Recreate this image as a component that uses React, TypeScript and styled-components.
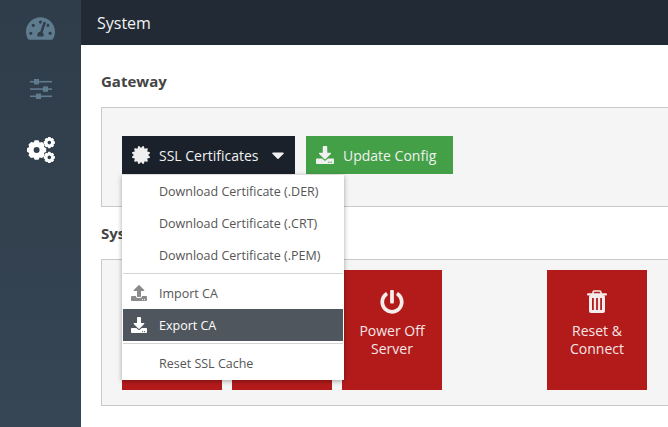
import React from 'react';
import styled, { createGlobalStyle } from 'styled-components';
import { FaTachometerAlt, FaCertificate, FaDownload, FaUpload, FaPowerOff, FaCaretDown } from 'react-icons/fa';

const GlobalStyle = createGlobalStyle`
  html, body {
    margin: 0;
    padding: 0;
    height: 100%;
    overflow: hidden;
    background: #fff;
    font-family: "Open Sans", "Liberation Sans", sans-serif;
  }
  #root { height: 100%; }
`;

const Page = styled.div`
  display: flex;
  width: 668px;
  height: 427px;
  overflow: hidden;
`;

const Sidebar = styled.nav`
  width: 81px;
  flex: none;
  display: flex;
  flex-direction: column;
  background: linear-gradient(#2f3c4a, #374654);
`;

const NavItem = styled.div<{ $active?: boolean }>`
  height: 61px;
  box-sizing: border-box;
  padding-bottom: 5px;
  display: flex;
  align-items: center;
  justify-content: center;
  color: ${p => (p.$active ? '#fff' : '#5f7b8e')};
  font-size: 29px;
`;

const Main = styled.main`
  flex: 1;
  min-width: 0;
  display: flex;
  flex-direction: column;
`;

const Header = styled.header`
  height: 45px;
  flex: none;
  box-sizing: border-box;
  padding-left: 16px;
  display: flex;
  align-items: center;
  background: #222a35;
  color: #f2f2f2;
  font-size: 16px;
`;

const Content = styled.div`
  padding: 26px 0 0 20px;
`;

const SectionTitle = styled.h2`
  margin: 0 0 16px;
  height: 20px;
  line-height: 20px;
  font-size: 15px;
  font-weight: 700;
  color: #444;
`;

const Panel = styled.section<{ $height: number }>`
  box-sizing: border-box;
  height: ${p => p.$height}px;
  margin-bottom: 16px;
  margin-right: -1px;
  padding: 28px 0 0 20px;
  background: #f5f5f5;
  border: 1px solid #c9c9c9;
  border-right: none;
  display: flex;
  gap: 10px;
  position: relative;
`;

const GatewayPanel = styled(Panel)`
  gap: 11px;
`;

const ActionPanel = styled(Panel)`
  padding-top: 10px;
`;

const ToolButton = styled.button<{ $bg: string }>`
  height: 38px;
  border: none;
  display: flex;
  align-items: center;
  gap: 9px;
  padding: 0 0 0 10px;
  font: 14px "Open Sans", sans-serif;
  color: #f0f0f0;
  background: ${p => p.$bg};
`;

const SslButton = styled(ToolButton)`
  width: 173px;
`;

const UpdateButton = styled(ToolButton)`
  width: 147px;
`;

const Caret = styled(FaCaretDown)`
  font-size: 20px;
  margin-left: 1px;
`;

const Menu = styled.ul`
  position: absolute;
  z-index: 2;
  left: 20px;
  top: 67px;
  width: 222px;
  height: 205px;
  box-sizing: border-box;
  margin: 0;
  padding: 0 1px;
  list-style: none;
  background: #fff;
  box-shadow: 0 1px 5px rgba(0, 0, 0, 0.35);
`;

const MenuItem = styled.li<{ $active?: boolean }>`
  height: 32px;
  box-sizing: border-box;
  padding-left: 8px;
  display: flex;
  align-items: center;
  font-size: 12.5px;
  color: ${p => (p.$active ? '#fff' : '#555')};
  background: ${p => (p.$active ? '#50565e' : 'transparent')};
`;

const MenuIcon = styled.span`
  width: 28px;
  flex: none;
  display: flex;
  font-size: 16px;
  color: inherit;
`;

const MutedIcon = styled(MenuIcon)`
  color: #8a8a8a;
`;

const Divider = styled.li`
  height: 1px;
  margin: 2px 0 3px;
  background: #d5d5d5;
`;

const ActionButton = styled.button<{ $gap?: number }>`
  width: 100px;
  height: 120px;
  box-sizing: border-box;
  border: none;
  padding: 18px 0 0;
  margin-left: ${p => p.$gap ?? 0}px;
  display: flex;
  flex-direction: column;
  align-items: center;
  background: #b31b1b;
  color: #f2e6e6;
  font: 14px/18px "Open Sans", sans-serif;
  text-align: center;
`;

const ActionIcon = styled.span`
  height: 28px;
  margin-bottom: 6px;
  font-size: 24px;
  display: flex;
  align-items: center;
  color: #f5ecec;
`;

const SlidersIcon = () => (
  <svg width="22" height="20" viewBox="0 0 22 20" fill="currentColor">
    <rect x="0" y="1.9" width="22" height="1.6" />
    <rect x="0" y="9.3" width="22" height="1.6" />
    <rect x="0" y="16.5" width="22" height="1.6" />
    <rect x="4" y="0" width="5" height="5.4" />
    <rect x="13" y="7.4" width="5" height="5.4" />
    <rect x="6" y="14.6" width="5" height="5.4" />
  </svg>
);

// toothed ring, used three times for the cogs icon
const gearPath = (cx: number, cy: number, outer: number, inner: number, hole: number, teeth: number) => {
  const step = (Math.PI * 2) / teeth;
  let d = '';
  for (let i = 0; i < teeth; i++) {
    const a = i * step;
    const pts: [number, number][] = [
      [inner, a - step * 0.5],
      [outer, a - step * 0.24],
      [outer, a + step * 0.24],
      [inner, a + step * 0.5]
    ];
    pts.forEach(([r, t], j) => {
      const x = (cx + r * Math.cos(t)).toFixed(2);
      const y = (cy + r * Math.sin(t)).toFixed(2);
      d += `${i === 0 && j === 0 ? 'M' : 'L'}${x} ${y}`;
    });
  }
  d += `ZM${cx + hole} ${cy}A${hole} ${hole} 0 1 0 ${cx - hole} ${cy}A${hole} ${hole} 0 1 0 ${cx + hole} ${cy}Z`;
  return d;
};

const CogsIcon = () => (
  <svg width="28" height="26" viewBox="0 0 28 26" fill="currentColor" fillRule="evenodd">
    <path d={gearPath(9.6, 13, 9.8, 8, 3, 8)} />
    <path d={gearPath(22.3, 5.6, 5.7, 4.6, 1.8, 8)} />
    <path d={gearPath(22.3, 20.4, 5.7, 4.6, 1.8, 8)} />
  </svg>
);

const TrashIcon = () => (
  <svg width="20" height="24" viewBox="0 0 20 24" fill="currentColor">
    <path d="M6 4V2.6Q6 1 7.6 1H12.4Q14 1 14 2.6V4" fill="none" stroke="currentColor" strokeWidth="1.6" />
    <rect x="0" y="3.2" width="20" height="2.4" rx="1" />
    <rect x="2" y="5" width="16" height="18" rx="2" />
    <rect x="5" y="8" width="1.8" height="12" fill="#b31b1b" />
    <rect x="9.1" y="8" width="1.8" height="12" fill="#b31b1b" />
    <rect x="13.2" y="8" width="1.8" height="12" fill="#b31b1b" />
  </svg>
);

export default function App() {
  return (
    <Page>
      <GlobalStyle />
      <Sidebar>
        <NavItem><FaTachometerAlt /></NavItem>
        <NavItem><SlidersIcon /></NavItem>
        <NavItem $active><CogsIcon /></NavItem>
      </Sidebar>
      <Main>
        <Header>System</Header>
        <Content>
          <SectionTitle>Gateway</SectionTitle>
          <GatewayPanel $height={100}>
            <SslButton $bg="#1a212a">
              <FaCertificate size={18} />
              SSL Certificates
              <Caret />
            </SslButton>
            <UpdateButton $bg="#43a047">
              <FaDownload size={18} />
              Update Config
            </UpdateButton>
            <Menu>
              <MenuItem><MenuIcon />Download Certificate (.DER)</MenuItem>
              <MenuItem><MenuIcon />Download Certificate (.CRT)</MenuItem>
              <MenuItem><MenuIcon />Download Certificate (.PEM)</MenuItem>
              <Divider />
              <MenuItem><MutedIcon><FaUpload /></MutedIcon>Import CA</MenuItem>
              <MenuItem $active><MenuIcon><FaDownload /></MenuIcon>Export CA</MenuItem>
              <Divider />
              <MenuItem><MenuIcon />Reset SSL Cache</MenuItem>
            </Menu>
          </GatewayPanel>
          <SectionTitle>System</SectionTitle>
          <ActionPanel $height={147}>
            <ActionButton />
            <ActionButton />
            <ActionButton>
              <ActionIcon><FaPowerOff /></ActionIcon>
              Power Off<br />Server
            </ActionButton>
            <ActionButton $gap={95}>
              <ActionIcon><TrashIcon /></ActionIcon>
              Reset &amp;<br />Connect
            </ActionButton>
          </ActionPanel>
        </Content>
      </Main>
    </Page>
  );
}
